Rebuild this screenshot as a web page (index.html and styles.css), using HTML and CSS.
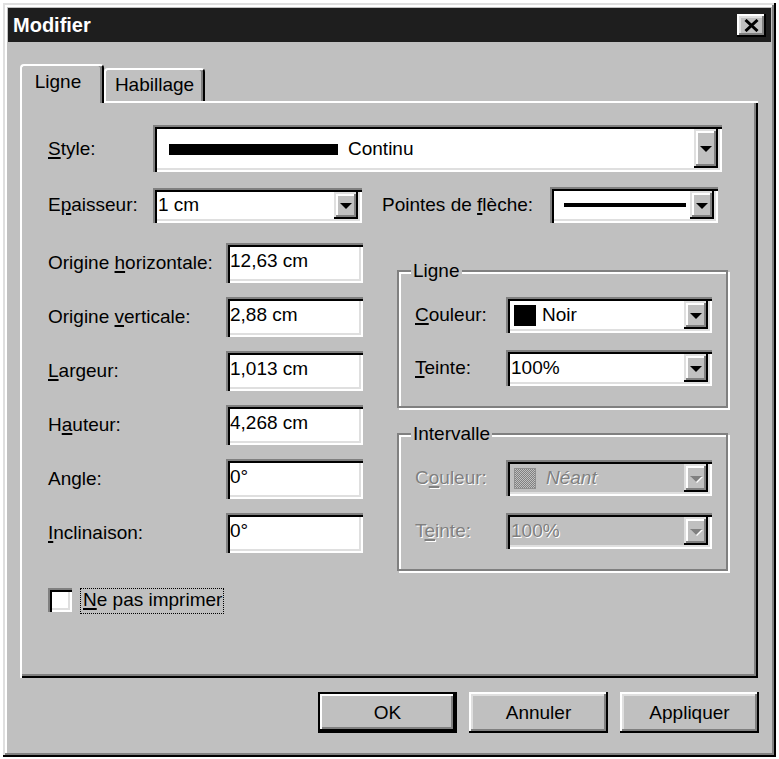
FILE: index.html
```html
<!DOCTYPE html>
<html lang="fr">
<head>
  <meta charset="UTF-8" />
  <title>Modifier</title>
  <link rel="stylesheet" href="styles.css">
</head>
<body>
  <div class="window">
    <div class="titlebar">
      <span class="title">Modifier</span>
      <button class="close-button" title="Fermer">
        <svg width="15" height="13" viewBox="0 0 15 13"><path d="M1.5 1L13.5 12M13.5 1L1.5 12" stroke="#000" stroke-width="3" fill="none" /></svg>
      </button>
    </div>

    <div class="content">
      <!-- onglets -->
      <div class="tabs">
        <div class="tab active">Ligne</div>
        <div class="tab">Habillage</div>
      </div>

      <div class="panel">
        <div class="row style-row">
          <label class="lbl lbl-main"><u>S</u>tyle:</label>
          <div class="combo combo-style">
            <span class="value"><span class="line-sample"></span>Continu</span>
            <span class="drop"></span>
          </div>
        </div>

        <div class="row second-row">
          <label class="lbl lbl-main">E<u>p</u>aisseur:</label>
          <div class="combo combo-thick">
            <span class="value">1 cm</span>
            <span class="drop"></span>
          </div>
          <label class="lbl lbl-arrows">Pointes de <u>f</u>lèche:</label>
          <div class="combo combo-arrows">
            <span class="value"><span class="arrow-sample"></span></span>
            <span class="drop"></span>
          </div>
        </div>

        <div class="main-grid">
          <div class="fields">
            <div class="field">
              <label class="lbl lbl-field">Origine <u>h</u>orizontale:</label>
              <input class="text-input" type="text" value="12,63 cm" />
            </div>
            <div class="field">
              <label class="lbl lbl-field">Origine <u>v</u>erticale:</label>
              <input class="text-input" type="text" value="2,88 cm" />
            </div>
            <div class="field">
              <label class="lbl lbl-field"><u>L</u>argeur:</label>
              <input class="text-input" type="text" value="1,013 cm" />
            </div>
            <div class="field">
              <label class="lbl lbl-field">H<u>a</u>uteur:</label>
              <input class="text-input" type="text" value="4,268 cm" />
            </div>
            <div class="field">
              <label class="lbl lbl-field">An<u>g</u>le:</label>
              <input class="text-input" type="text" value="0°" />
            </div>
            <div class="field">
              <label class="lbl lbl-field"><u>I</u>nclinaison:</label>
              <input class="text-input" type="text" value="0°" />
            </div>
          </div>

          <div class="groups">
            <fieldset class="group">
              <legend>Ligne</legend>
              <div class="group-row">
                <label class="lbl lbl-group"><u>C</u>ouleur:</label>
                <div class="combo combo-group">
                  <span class="value"><span class="swatch"></span>Noir</span>
                  <span class="drop"></span>
                </div>
              </div>
              <div class="group-row">
                <label class="lbl lbl-group"><u>T</u>einte:</label>
                <div class="combo combo-group">
                  <span class="value">100%</span>
                  <span class="drop"></span>
                </div>
              </div>
            </fieldset>

            <fieldset class="group">
              <legend>Intervalle</legend>
              <div class="group-row">
                <label class="lbl lbl-group disabled">C<u>o</u>uleur:</label>
                <div class="combo combo-group disabled">
                  <span class="value"><span class="swatch dither"></span><i>Néant</i></span>
                  <span class="drop"></span>
                </div>
              </div>
              <div class="group-row">
                <label class="lbl lbl-group disabled">T<u>e</u>inte:</label>
                <div class="combo combo-group disabled">
                  <span class="value">100%</span>
                  <span class="drop"></span>
                </div>
              </div>
            </fieldset>
          </div>
        </div>

        <div class="check-row">
          <span class="checkbox"></span>
          <span class="check-label"><u>N</u>e pas imprimer</span>
        </div>
      </div>

      <div class="buttons">
        <button class="btn default">OK</button>
        <button class="btn">Annuler</button>
        <button class="btn">Appliquer</button>
      </div>
    </div>
  </div>
</body>
</html>
```

FILE: styles.css
```css
* {
  box-sizing: border-box;
}

body {
  margin: 0;
  background: #fff;
  font-family: "Liberation Sans", Arial, sans-serif;
  font-size: 19px;
  color: #000;
}

u {
  text-decoration-thickness: 2px;
  text-underline-offset: 2px;
}

/* fenêtre */
.window {
  width: 773px;
  height: 754px;
  margin: 3px 0 0 3px;
  padding: 5px;
  background: #c0c0c0;
  box-shadow: inset -2px -2px #000, inset 2px 2px #dfdfdf, inset -4px -4px #808080, inset 4px 4px #fff;
  display: flex;
  flex-direction: column;
}

.titlebar {
  height: 34px;
  background: #1e1e1e;
  display: flex;
  align-items: center;
  justify-content: space-between;
  padding: 0 5px;
}

.title {
  color: #fff;
  font-weight: bold;
  font-size: 20px;
}

.close-button {
  width: 29px;
  height: 23px;
  padding: 0;
  border: none;
  background: #c0c0c0;
  box-shadow: inset -2px -2px #000, inset 2px 2px #fff, inset -4px -4px #808080, inset 4px 4px #dfdfdf;
  display: flex;
  align-items: center;
  justify-content: center;
}

.content {
  padding: 22px 13px 0 12px;
}

/* onglets */
.tabs {
  display: flex;
  align-items: flex-end;
  height: 37px;
}

.tab {
  background: #c0c0c0;
  border-top: 2px solid #fff;
  border-left: 2px solid #fff;
  border-right: 2px solid #000;
  border-radius: 4px 4px 0 0;
  box-shadow: inset -2px 0 #808080;
  text-align: center;
  height: 33px;
  width: 101px;
  padding-top: 4px;
}

.tab.active {
  position: relative;
  z-index: 1;
  width: 84px;
  height: 39px;
  margin-bottom: -2px;
  padding-top: 5px;
  padding-right: 8px;
}

.panel {
  height: 577px;
  padding: 24px 36px 0 28px;
  box-shadow: inset 2px 2px #fff, inset -2px -2px #000, inset -4px -4px #808080;
}

.row {
  display: flex;
  align-items: center;
}

.style-row {
  height: 47px;
}

.second-row {
  margin-top: 15px;
  height: 36px;
}

.lbl {
  white-space: nowrap;
}

.lbl-main {
  width: 105px;
}

.lbl-arrows {
  width: 168px;
  margin-left: 20px;
}

.lbl-field {
  width: 178px;
}

.lbl-group {
  width: 91px;
}

.disabled.lbl,
.combo.disabled .value {
  color: #808080;
  text-shadow: 1px 1px #fff;
}

/* listes déroulantes */
.combo {
  display: flex;
  align-items: stretch;
  background: #fff;
  padding: 4px;
  box-shadow: inset 2px 2px #808080, inset 4px 4px #000, inset -2px -2px #fff, inset -4px -4px #dfdfdf;
}

.combo .value {
  flex: 1;
  display: flex;
  align-items: center;
  padding-left: 1px;
  white-space: nowrap;
}

.combo.disabled {
  background: #c0c0c0;
}

.drop {
  width: 24px;
  background: #c0c0c0;
  box-shadow: inset -2px -2px #000, inset 2px 2px #dfdfdf, inset -4px -4px #808080, inset 4px 4px #fff;
  display: flex;
  align-items: center;
  justify-content: center;
}

.drop::after {
  content: "";
  border-left: 6px solid transparent;
  border-right: 6px solid transparent;
  border-top: 6px solid #000;
  margin-top: 1px;
}

.combo.disabled .drop::after {
  border-top-color: #808080;
  filter: drop-shadow(1px 1px 0 #fff);
}

.combo-style {
  flex: 1;
  height: 47px;
}

.line-sample {
  display: inline-block;
  width: 169px;
  height: 11px;
  background: #000;
  margin: 2px 10px 0 11px;
}

.combo-thick {
  width: 209px;
  height: 35px;
}

.combo-arrows {
  width: 168px;
  height: 36px;
}

.arrow-sample {
  display: inline-block;
  width: 122px;
  height: 4px;
  background: #000;
  margin-left: 9px;
}

.combo-group {
  width: 206px;
  height: 36px;
}

.swatch {
  display: inline-block;
  width: 22px;
  height: 21px;
  background: #000;
  margin: 0 6px 0 3px;
}

.swatch.dither {
  background: repeating-conic-gradient(#808080 0 25%, #c0c0c0 0 50%) 0 0 / 2px 2px;
  border: 1px solid #909090;
  margin-right: 10px;
}

/* champs */
.main-grid {
  margin-top: 20px;
  display: grid;
  grid-template-columns: 315px 331px;
  column-gap: 34px;
}

.fields {
  display: flex;
  flex-direction: column;
  gap: 14px;
}

.field {
  display: flex;
  align-items: center;
  height: 40px;
}

.text-input {
  width: 137px;
  height: 40px;
  border: none;
  outline: none;
  font: inherit;
  color: #000;
  background: #fff;
  padding: 0 2px 5px 4px;
  box-shadow: inset 2px 2px #808080, inset 4px 4px #000, inset -2px -2px #fff, inset -4px -4px #dfdfdf;
}

/* groupes */
.groups {
  padding-top: 17px;
  display: flex;
  flex-direction: column;
  gap: 15px;
}

.group {
  margin: 0;
  min-width: 0;
  padding: 15px 14px 20px 16px;
  border: 2px solid #808080;
  box-shadow: inset 2px 2px #fff, 2px 2px #fff;
  display: flex;
  flex-direction: column;
  gap: 17px;
}

.group legend {
  padding: 0 2px;
  margin-left: -4px;
  line-height: 22px;
  background: #c0c0c0;
}

.group-row {
  display: flex;
  align-items: center;
}

/* case à cocher */
.check-row {
  margin-top: 17px;
  display: flex;
  align-items: flex-start;
  gap: 8px;
}

.checkbox {
  width: 24px;
  height: 24px;
  background: #fff;
  box-shadow: inset 2px 2px #808080, inset 4px 4px #000, inset -2px -2px #fff, inset -4px -4px #dfdfdf;
}

.check-label {
  border: 1px dotted #000;
  padding: 0 1px 2px 2px;
}

/* boutons */
.buttons {
  margin-top: 14px;
  display: flex;
  justify-content: flex-end;
  gap: 12px;
  margin-right: -1px;
}

.btn {
  width: 139px;
  height: 41px;
  border: none;
  background: #c0c0c0;
  font: inherit;
  color: #000;
  box-shadow: inset -2px -2px #000, inset 2px 2px #fff, inset -4px -4px #808080, inset 4px 4px #dfdfdf;
}

.btn.default {
  box-shadow: inset 0 0 0 2px #000, inset -4px -4px #000, inset 4px 4px #fff, inset -6px -6px #808080;
}
```
